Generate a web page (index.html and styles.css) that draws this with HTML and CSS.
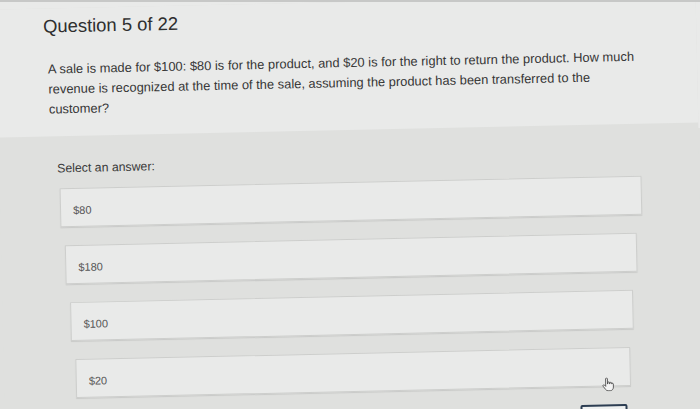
FILE: index.html
```html
<!DOCTYPE html>
<html lang="en">
<head>
<meta charset="utf-8">
<title>Question 5 of 22</title>
<link rel="stylesheet" href="styles.css">
</head>
<body>
<div class="page">
  <header class="question">
    <h1 class="question-title">Question 5 of 22</h1>
    <p class="question-prompt">A sale is made for $100: $80 is for the product, and $20 is for the right to return the product. How much revenue is recognized at the time of the sale, assuming the product has been transferred to the<br>customer?</p>
  </header>
  <section class="answers">
    <p class="answers-label">Select an answer:</p>
    <ul class="options">
      <li class="option"><span>$80</span></li>
      <li class="option"><span>$180</span></li>
      <li class="option"><span>$100</span></li>
      <li class="option"><span>$20</span></li>
    </ul>
    <button class="submit" type="button" aria-label="Submit"></button>
  </section>
  <svg class="cursor" width="12" height="14" viewBox="0 0 13 15" aria-hidden="true">
    <path d="M4 1.5c0-.6.4-1 1-1s1 .4 1 1V7h.3V5.8c0-.6.4-1 1-1s1 .4 1 1V7h.2V6.3c0-.6.4-1 1-1s1 .4 1 1v.9c0-.5.4-.9.9-.9s.9.4.9.9v3.3c0 2-1.4 3.9-3.5 3.9H6.5c-1.2 0-2-.6-2.7-1.5L1.2 9.4c-.4-.5-.3-1.1.2-1.4.5-.3 1-.2 1.4.2L4 9.6z" fill="#f4f4f4" stroke="#444" stroke-width=".9"/>
  </svg>
</div>
</body>
</html>
```
FILE: styles.css
```css
html, body {
  margin: 0;
  height: 100%;
  overflow: hidden;
}

body {
  box-sizing: border-box;
  border-top: 2px solid #c7c8c7;
  background: linear-gradient(#e9eae9 0 128px, #dfe0de 128px);
  font-family: "Liberation Sans", Arial, sans-serif;
}

.page {
  position: relative;
  height: 407px;
  background: #dfe0de;
  transform: rotate(-1.25deg);
  transform-origin: 350px 202px;
}

.question {
  background: #e9eae9;
  padding: 7px 0 17px 47px;
}

.question-title {
  margin: 0;
  font-size: 18.4px;
  line-height: 22px;
  font-weight: 400;
  color: #2e2e2e;
}

.question-prompt {
  margin: 22px 0 0 4px;
  width: 596px;
  font-size: 12.9px;
  line-height: 20px;
  color: #363636;
}

.answers {
  display: flex;
  flex-direction: column;
  padding-left: 58px;
}

.answers-label {
  margin: 24px 0 12px;
  font-size: 12.3px;
  line-height: 16px;
  color: #3a3a3a;
}

.options {
  list-style: none;
  margin: 0;
  padding: 0;
  display: flex;
  flex-direction: column;
  gap: 18px;
}

.option {
  box-sizing: border-box;
  height: 39px;
  display: flex;
  align-items: center;
  padding: 4px 0 0 12px;
  border: 1px solid #cdcecc;
  background: #e9eae9;
  box-shadow: 0 1px 1px rgba(0, 0, 0, 0.1);
  font-size: 11px;
  color: #555;
}

.option:nth-child(1) { margin: 0 58px 0 2px; }
.option:nth-child(2) { margin: 0 64px 0 6px; }
.option:nth-child(3) { margin: 0 69px 0 10px; }
.option:nth-child(4) { margin: 0 73px 0 14px; }

.submit {
  align-self: flex-end;
  margin: 18px 77px 0 0;
  width: 47px;
  height: 28px;
  border: 2px solid #2c3d52;
  border-radius: 2px;
  background: #eef0f0;
}

.cursor {
  position: absolute;
  left: 598px;
  top: 381px;
}
```
